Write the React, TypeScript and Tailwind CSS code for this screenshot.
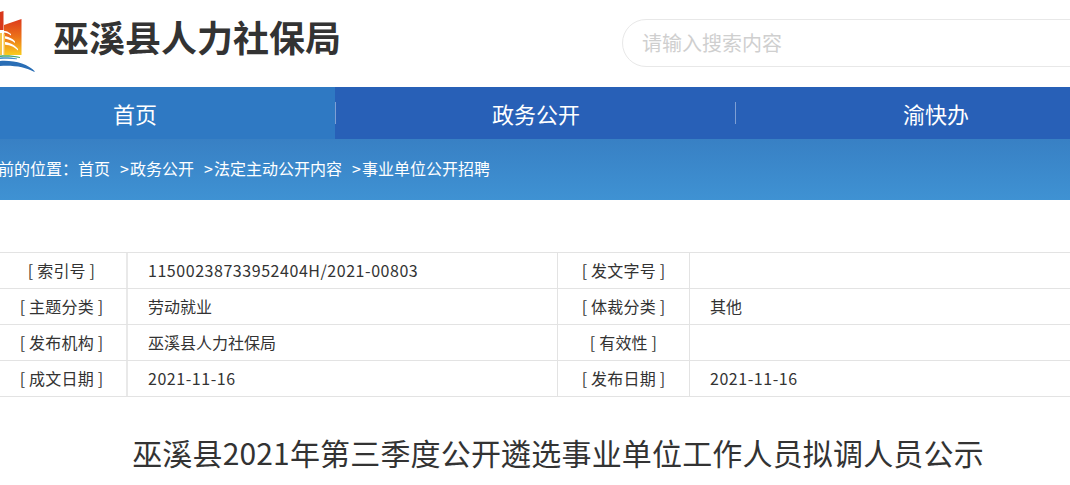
const cjk = "font-['Noto_Sans_CJK_SC','Noto_Sans',sans-serif]";

const rows = [
  ["[ 索引号 ]", "11500238733952404H/2021-00803", "[ 发文字号 ]", ""],
  ["[ 主题分类 ]", "劳动就业", "[ 体裁分类 ]", "其他"],
  ["[ 发布机构 ]", "巫溪县人力社保局", "[ 有效性 ]", ""],
  ["[ 成文日期 ]", "2021-11-16", "[ 发布日期 ]", "2021-11-16"],
];

const crumbs = ["政务公开", "法定主动公开内容", "事业单位公开招聘"];

// digits in the reference run a little wider than the CJK font's
function Value({ text }: { text: string }) {
  return <span className={/^[0-9]/.test(text) ? "tracking-[0.55px]" : ""}>{text}</span>;
}

function Logo() {
  return (
    <svg width="36" height="75" viewBox="0 0 36 75" className="ml-[65px] shrink-0">
      <defs>
        <linearGradient id="flag" x1="0" y1="0" x2="0" y2="1">
          <stop offset="0" stopColor="#dc3a1d" />
          <stop offset="0.5" stopColor="#ec7219" />
          <stop offset="1" stopColor="#f8cc1c" />
        </linearGradient>
      </defs>
      <path d="M0 12l3.500-1v19H0z" fill="#d8381c" />
      <path d="M4 25l17.500-6v36H4z" fill="url(#flag)" />
      <path d="M0 31c4-1 8 0 11 3v1.500C8 33 4 32 0 33zM0 36.500c6-1 12 1 15 5v1.500c-4-3.500-9-5-15-4.500zM0 42c7-1 14 2 18 7v1.500C14 46 7 44 0 44.500z" fill="#fff" />
      <path d="M0 33h2v22H0zM3.500 33.500h1.500V55H3.500z" fill="#f6c44a" />
      <path d="M0 55.500c7-.5 14 0 20 1.500v1C14 56.800 7 56.500 0 57z" fill="#46a868" />
      <path d="M0 57.500c6-.5 12 0 17 1v.800C12 58.500 6 58.500 0 59z" fill="#3d8fc9" />
      <path d="M0 61c14-1 28 3 35 10.500l-1 .3C26 67 13 65 0 66z" fill="#2a6eb5" />
    </svg>
  );
}

export default function App() {
  return (
    <div className={`w-[1070px] h-[485px] overflow-hidden bg-white text-[#333] ${cjk}`}>
      <div className="w-[1200px] -ml-[65px]">
        {/* Header */}
        <div className="h-[87px] flex items-center">
          <div className="self-start">
            <Logo />
          </div>
          <h1 className="ml-[17px] text-[36px] font-bold leading-none text-[#333] whitespace-nowrap -mt-[16px]">巫溪县人力社保局</h1>
          <div className="ml-[281px] w-[560px] h-[48px] -mt-[1px] rounded-[24px] border border-[#e8e8e8] flex items-center pl-[19px] text-[20px] text-[#cfcfcf]">
            请输入搜索内容
          </div>
        </div>

        {/* Nav */}
        <div className="flex h-[52px] bg-[#2860b7] text-white text-[22px]">
          <div className="w-[400px] flex items-center justify-center bg-[#2f79c3]">首页</div>
          <div className="w-[400px] flex items-center justify-center relative pl-[2px]">
            <span className="absolute left-0 top-[15px] h-[22px] w-px bg-white/40" />
            政务公开
          </div>
          <div className="w-[400px] flex items-center justify-center relative pl-[2px]">
            <span className="absolute left-0 top-[15px] h-[22px] w-px bg-white/40" />
            渝快办
          </div>
        </div>

        {/* Breadcrumb */}
        <div className="h-[61px] bg-gradient-to-b from-[#3880c4] to-[#3f92d3] flex items-center pl-[31px] pb-[4px] text-white text-[16px]">
          <span>您当前的位置：首页</span>
          {crumbs.map((c) => (
            <span key={c} className="ml-[10px]">
              <span className="inline-block w-[10px]">&gt;</span>
              {c}
            </span>
          ))}
        </div>

        {/* Info table */}
        <div className="ml-[62px] w-[1122px] mt-[52px] border-t border-[#e3e3e3]">
          {rows.map((r) => (
            <div key={r[0]} className="grid grid-cols-[131px_430px_132px_1fr] h-[36px] border-b border-[#e3e3e3] text-[16px] leading-[35px]">
              <div className="text-center border-r-2 border-[#e9e9e9] tracking-[0.2px]">{r[0]}</div>
              <div className="pl-[20px] border-r border-[#e3e3e3]"><Value text={r[1]} /></div>
              <div className="text-center border-r border-[#e3e3e3] tracking-[0.2px]">{r[2]}</div>
              <div className="pl-[20px]"><Value text={r[3]} /></div>
            </div>
          ))}
        </div>

        {/* Title */}
        <h2 className="ml-[62px] w-[1122px] mt-[33px] text-center text-[30px] leading-[44px] tracking-[0.17px] font-normal text-[#333]">
          巫溪县2021年第三季度公开遴选事业单位工作人员拟调人员公示
        </h2>
      </div>
    </div>
  );
}
